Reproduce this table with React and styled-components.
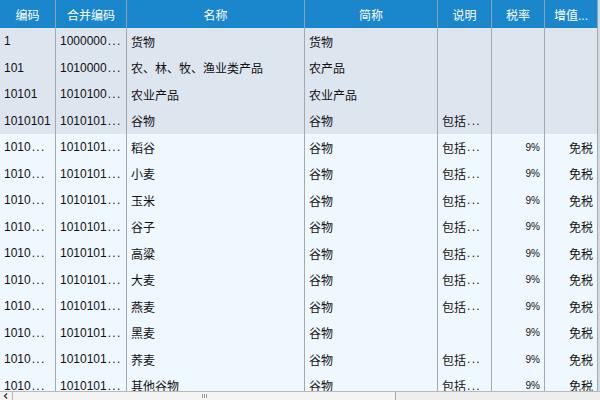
import React from "react";
import styled, { createGlobalStyle } from "styled-components";

const GlobalStyle = createGlobalStyle`
  html, body {
    margin: 0;
    padding: 0;
    background: #f0f0f0;
  }
  body {
    font-family: "Liberation Sans", "Noto Sans CJK SC", sans-serif;
    font-size: 12px;
  }
`;

const COLS = "56px 71px 178px 133px 54px 53px 53px 2px";

const columns = ["编码", "合并编码", "名称", "简称", "说明", "税率", "增值..."];

const groups = [
  ["1", "1000000", "货物", "货物", ""],
  ["101", "1010000", "农、林、牧、渔业类产品", "农产品", ""],
  ["10101", "1010100", "农业产品", "农业产品", ""],
  ["1010101", "1010101", "谷物", "谷物", "包括"],
];

const items = [
  ["稻谷", true],
  ["小麦", true],
  ["玉米", true],
  ["谷子", true],
  ["高粱", true],
  ["大麦", true],
  ["燕麦", true],
  ["黑麦", false],
  ["荞麦", true],
  ["其他谷物", true],
];

// truncated text with widely spaced dots like the original grid
const Cut = ({ text }) => (
  <>
    {text}
    <Dots>...</Dots>
  </>
);

const Grid = () => {
  return (
    <Wrapper>
      <GlobalStyle />
      <Viewport>
        <HeaderRow>
          {columns.map((c) => (
            <HeadCell key={c}>{c}</HeadCell>
          ))}
          <Gutter />
        </HeaderRow>
        {groups.map((g) => (
          <Row key={g[0]} $group>
            <Cell>{g[0]}</Cell>
            <Cell>
              <Cut text={g[1]} />
            </Cell>
            <Cell>{g[2]}</Cell>
            <Cell>{g[3]}</Cell>
            <Cell>{g[4] && <Cut text={g[4]} />}</Cell>
            <Cell />
            <Cell />
            <Gutter />
          </Row>
        ))}
        {items.map(([name, desc]) => (
          <Row key={name}>
            <Cell>
              <Cut text="1010" />
            </Cell>
            <Cell>
              <Cut text="1010101" />
            </Cell>
            <Cell>{name}</Cell>
            <Cell>谷物</Cell>
            <Cell>{desc && <Cut text="包括" />}</Cell>
            <Cell $right $small>
              9%
            </Cell>
            <Cell $right>免税</Cell>
            <Gutter />
          </Row>
        ))}
      </Viewport>
      <HScroll>
        <ArrowBtn>
          <svg width="6" height="6" viewBox="0 0 6 6">
            <path d="M4 0.5 L1.5 3 L4 5.5" fill="none" stroke="#333" strokeWidth="1.2" />
          </svg>
        </ArrowBtn>
        <Thumb>
          <Grip>
            <span />
            <span />
            <span />
          </Grip>
        </Thumb>
        <Track />
      </HScroll>
    </Wrapper>
  );
};

const Wrapper = styled.div`
  width: 600px;
  height: 400px;
  display: flex;
  flex-direction: column;
  overflow: hidden;
  background: #eff8fe;
`;

const Viewport = styled.div`
  flex: 1;
  overflow: hidden;
`;

const HeaderRow = styled.div`
  display: grid;
  grid-template-columns: ${COLS};
  height: 28px;
  background: #1a87cd;
`;

const HeadCell = styled.div`
  display: flex;
  align-items: center;
  justify-content: center;
  color: #fff;
  font-size: 12px;
  border-right: 1px solid #8fa2b4;
  white-space: nowrap;
  overflow: hidden;
`;

const Row = styled.div`
  display: grid;
  grid-template-columns: ${COLS};
  height: 26.5px;
  background: ${(p) => (p.$group ? "#dde5ef" : "#eff8fe")};
`;

const Cell = styled.div`
  display: flex;
  align-items: center;
  justify-content: ${(p) => (p.$right ? "flex-end" : "flex-start")};
  padding: 0 4px;
  border-right: 1px solid #a5a9ad;
  color: #111;
  font-size: ${(p) => (p.$small ? "10px" : "12px")};
  white-space: nowrap;
  overflow: hidden;
`;

const Dots = styled.span`
  letter-spacing: 1.3px;
  margin-left: 1px;
`;

const Gutter = styled.div`
  background: #d6dbe0;
`;

const HScroll = styled.div`
  height: 8px;
  display: flex;
  border-top: 1px solid #b9b9b9;
  background: #f2f2f2;
`;

const ArrowBtn = styled.div`
  width: 12px;
  display: flex;
  align-items: center;
  justify-content: center;
  border-right: 1px solid #b9b9b9;
`;

const Thumb = styled.div`
  width: 382px;
  border-right: 1px solid #a9a9a9;
  background: #f4f4f4;
  display: flex;
  justify-content: center;
  align-items: center;
`;

const Grip = styled.div`
  display: flex;
  gap: 1px;
  span {
    width: 1px;
    height: 4px;
    background: #9a9a9a;
  }
`;

const Track = styled.div`
  flex: 1;
  background: #eeeeee;
`;

export default function App() {
  return <Grid />;
}
